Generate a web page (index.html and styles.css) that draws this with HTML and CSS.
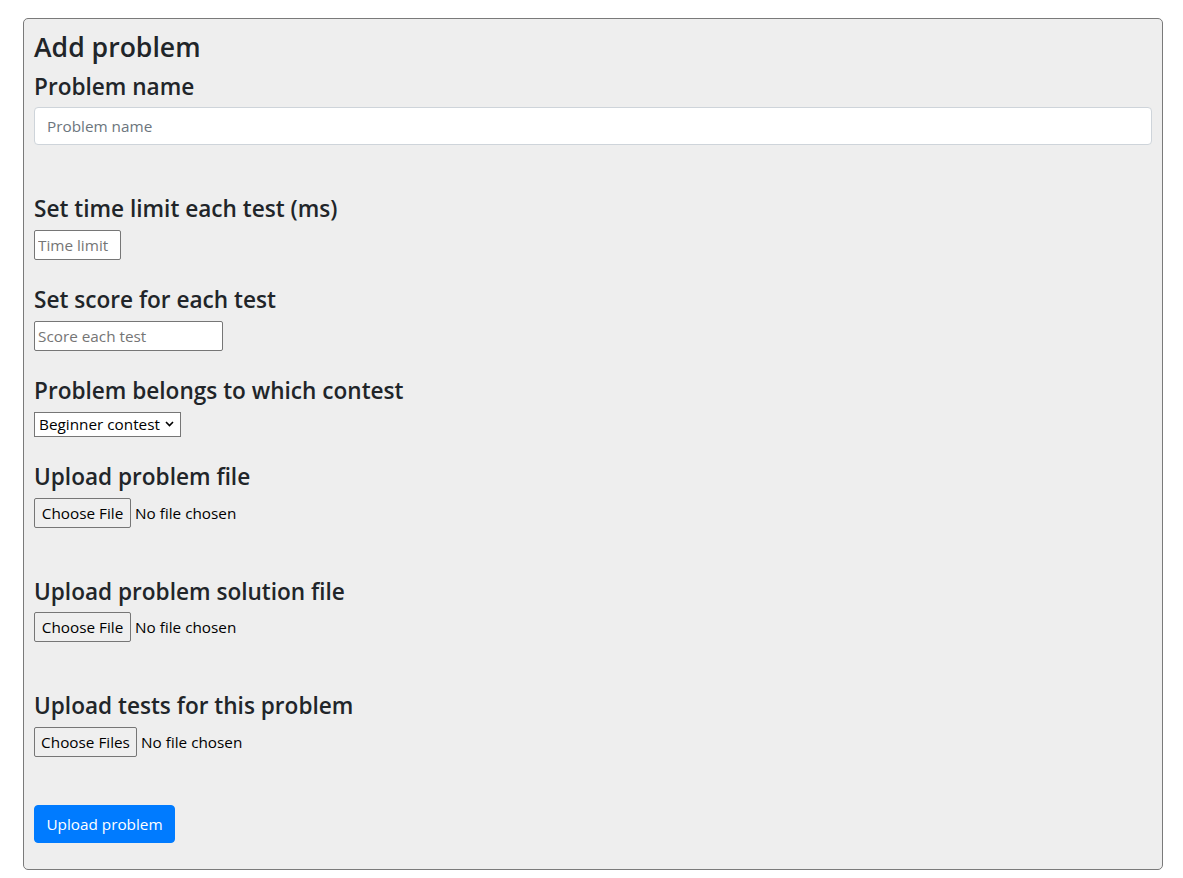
FILE: index.html
```html
<!DOCTYPE html>
<html lang="en">
<head>
<meta charset="utf-8">
<title>Add problem</title>
<link rel="stylesheet" href="styles.css">
</head>
<body>
<div class="page">
  <div class="card">
    <h3 class="title">Add problem</h3>
    <form class="form">
      <div class="field field-spaced">
        <h4 class="label">Problem name</h4>
        <input class="form-control" type="text" placeholder="Problem name">
      </div>
      <div class="field">
        <h4 class="label">Set time limit each test (ms)</h4>
        <input class="plain-input input-time" type="text" placeholder="Time limit">
      </div>
      <div class="field">
        <h4 class="label">Set score for each test</h4>
        <input class="plain-input input-score" type="text" placeholder="Score each test">
      </div>
      <div class="field">
        <h4 class="label">Problem belongs to which contest</h4>
        <span class="select-wrap">
          <select class="plain-select">
            <option>Beginner contest</option>
          </select>
          <svg class="chevron" width="9" height="6" viewBox="0 0 9 6"><path d="M1 1 L4.5 4.5 L8 1" fill="none" stroke="#000" stroke-width="1.6"/></svg>
        </span>
      </div>
      <div class="field field-spaced">
        <h4 class="label">Upload problem file</h4>
        <div class="file-row">
          <button type="button" class="file-btn">Choose File</button>
          <span class="file-text">No file chosen</span>
        </div>
      </div>
      <div class="field field-spaced">
        <h4 class="label">Upload problem solution file</h4>
        <div class="file-row">
          <button type="button" class="file-btn">Choose File</button>
          <span class="file-text">No file chosen</span>
        </div>
      </div>
      <div class="field field-spaced">
        <h4 class="label">Upload tests for this problem</h4>
        <div class="file-row">
          <button type="button" class="file-btn file-btn-multi">Choose Files</button>
          <span class="file-text">No file chosen</span>
        </div>
      </div>
      <button type="submit" class="btn-primary">Upload problem</button>
    </form>
  </div>
</div>
</body>
</html>
```

FILE: styles.css
```css
html, body {
  margin: 0;
  padding: 0;
  background: #fff;
}

body {
  font-family: "Open Sans", "Noto Sans", sans-serif;
  font-size: 15.3px;
  line-height: 24px;
  color: #212529;
}

.page {
  padding: 18px 0 8px 23px;
}

.card {
  box-sizing: border-box;
  width: 1140px;
  background: #eeeeee;
  border: 1px solid #7a7a7a;
  border-radius: 5px;
  padding: 10px 10px 10px 10px;
}

.title {
  margin: 0 0 6px 0;
  padding-top: 2px;
  font-size: 26.6px;
  line-height: 33.6px;
  font-weight: 600;
}

.form {
  display: flex;
  flex-direction: column;
  align-items: flex-start;
}

.field {
  display: flex;
  flex-direction: column;
  align-items: flex-start;
  margin-bottom: 24px;
  width: 100%;
}

.field-spaced {
  margin-bottom: 48px;
}

.label {
  margin: 0 0 6px 0;
  padding-top: 2px;
  font-size: 22.6px;
  line-height: 28.8px;
  font-weight: 600;
}

.form-control {
  box-sizing: border-box;
  width: 100%;
  height: 38px;
  padding: 6px 12px;
  font-family: inherit;
  font-size: 15.3px;
  line-height: 24px;
  color: #495057;
  background: #fff;
  border: 1px solid #ced4da;
  border-radius: 4px;
  outline: none;
}

.form-control::placeholder {
  color: #6c757d;
  opacity: 1;
}

.plain-input {
  box-sizing: border-box;
  height: 30px;
  padding: 1px 3px;
  font-family: inherit;
  font-size: 15.3px;
  color: #000;
  background: #fff;
  border: 1px solid #767676;
  border-radius: 2px;
  outline: none;
}

.plain-input::placeholder {
  color: #757575;
  opacity: 1;
}

.input-time {
  width: 87px;
}

.input-score {
  width: 189px;
}

.select-wrap {
  position: relative;
  display: inline-block;
}

.plain-select {
  appearance: none;
  -webkit-appearance: none;
  box-sizing: border-box;
  display: block;
  width: 147px;
  height: 25px;
  margin: 0;
  padding: 0 18px 0 4px;
  font-family: inherit;
  font-size: 15.3px;
  line-height: 23px;
  color: #000;
  background: #fff;
  border: 1px solid #767676;
  border-radius: 0;
  outline: none;
}

.chevron {
  position: absolute;
  right: 7px;
  top: 9px;
  pointer-events: none;
}

.file-row {
  display: flex;
  align-items: center;
  gap: 4px;
  height: 30px;
}

.file-btn {
  box-sizing: border-box;
  width: 97px;
  height: 30px;
  padding: 0;
  font-family: inherit;
  font-size: 15.3px;
  color: #000;
  background: #efefef;
  border: 1px solid #767676;
  border-radius: 2px;
  white-space: nowrap;
}

.file-btn-multi {
  width: 103px;
}

.file-text {
  color: #000;
  font-size: 15.3px;
}

.btn-primary {
  box-sizing: border-box;
  height: 38px;
  width: 141px;
  margin-bottom: 16px;
  padding: 0;
  font-family: inherit;
  font-size: 15.3px;
  line-height: 24px;
  white-space: nowrap;
  color: #fff;
  background: #007bff;
  border: 1px solid #007bff;
  border-radius: 4px;
}
```
